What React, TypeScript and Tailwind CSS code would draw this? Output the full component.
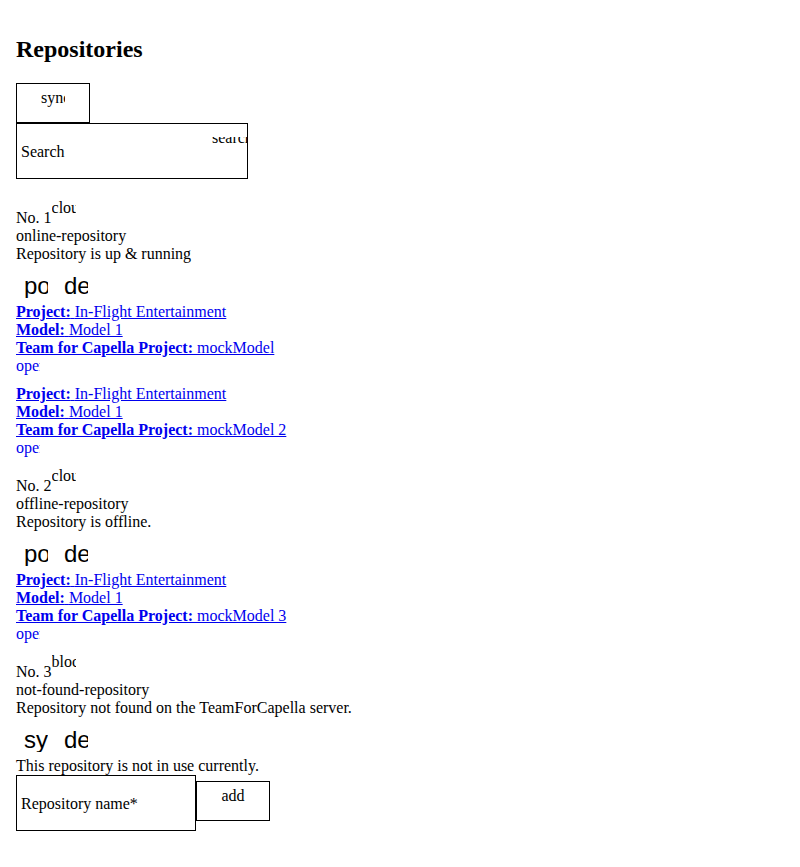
import React from "react";

type Link = { project: string; model: string; t4c: string };

type Repo = {
  no: number;
  icon: string;
  name: string;
  status: string;
  actions: string[];
  links: Link[];
  gap: string;
};

const repos: Repo[] = [
  {
    no: 1,
    icon: "cloud",
    name: "online-repository",
    status: "Repository is up & running",
    actions: ["post_add", "delete"],
    links: [
      { project: "In-Flight Entertainment", model: "Model 1", t4c: "mockModel" },
      { project: "In-Flight Entertainment", model: "Model 1", t4c: "mockModel 2" },
    ],
    gap: "mt-[29px]",
  },
  {
    no: 2,
    icon: "cloud_off",
    name: "offline-repository",
    status: "Repository is offline.",
    actions: ["post_add", "delete"],
    links: [{ project: "In-Flight Entertainment", model: "Model 1", t4c: "mockModel 3" }],
    gap: "mt-[19px]",
  },
  {
    no: 3,
    icon: "block",
    name: "not-found-repository",
    status: "Repository not found on the TeamForCapella server.",
    actions: ["sync", "delete"],
    links: [],
    gap: "mt-[19px]",
  },
];

// icon font is missing, so the ligature name shows up clipped to 24px
function ClippedIcon({ name, className = "" }: { name: string; className?: string }) {
  return (
    <span className={`inline-block w-6 h-[18px] overflow-hidden whitespace-nowrap leading-[18px] align-top ${className}`}>
      {name}
    </span>
  );
}

function IconButton({ name }: { name: string }) {
  return (
    <button className="w-10 h-10 px-2 pt-[11px] flex items-start text-black">
      <span className="block w-6 h-6 overflow-hidden whitespace-nowrap text-left text-[24px] leading-6 font-['Liberation_Sans',Arial,sans-serif]">
        {name}
      </span>
    </button>
  );
}

function TextField({ label, width, icon }: { label: string; width: string; icon?: string }) {
  return (
    <div className={`relative ${width} h-14 border border-black overflow-hidden`}>
      <div className="pl-1 pt-[19px] leading-[18px] whitespace-nowrap">{label}</div>
      {icon && (
        <div className="absolute left-[195px] top-[13px] w-[40px] h-[6px] overflow-hidden">
          <div className="-mt-[8px] leading-[18px] whitespace-nowrap">{icon}</div>
        </div>
      )}
    </div>
  );
}

function OutlinedIconButton({ name, className = "" }: { name: string; className?: string }) {
  return (
    <button className={`w-[74px] h-10 border border-black flex justify-center items-start pt-[5px] ${className}`}>
      <ClippedIcon name={name} />
    </button>
  );
}

function ModelLink({ link }: { link: Link }) {
  return (
    <div className="mb-[10px] leading-[18px] text-[#0000ee]">
      <div>
        <a href="#" className="underline">
          <b>Project:</b> {link.project}
        </a>
      </div>
      <div>
        <a href="#" className="underline">
          <b>Model:</b> {link.model}
        </a>
      </div>
      <div>
        <a href="#" className="underline">
          <b>Team for Capella Project:</b> {link.t4c}
        </a>
      </div>
      <div className="h-[18px]">
        <ClippedIcon name="open_in_new" />
      </div>
    </div>
  );
}

function RepoCard({ repo }: { repo: Repo }) {
  return (
    <div className={repo.gap}>
      <div className="h-[19px] pt-[1px] leading-[18px] whitespace-nowrap">
        No. {repo.no}
        <ClippedIcon name={repo.icon} className="relative -top-[10px]" />
      </div>
      <div className="leading-[18px]">{repo.name}</div>
      <div className="leading-[18px]">{repo.status}</div>
      <div className="flex h-10">
        {repo.actions.map((a) => (
          <IconButton key={a} name={a} />
        ))}
      </div>
      {repo.links.map((l) => (
        <ModelLink key={l.t4c} link={l} />
      ))}
      {repo.links.length === 0 && (
        <>
          <div className="leading-[18px]">This repository is not in use currently.</div>
          <div className="flex items-start">
            <TextField label="Repository name*" width="w-[180px]" />
            <OutlinedIconButton name="add" className="mt-[6px]" />
          </div>
        </>
      )}
    </div>
  );
}

export default function App() {
  return (
    <div className="min-h-screen bg-white text-black px-4 text-[16px] font-['Liberation_Serif','Times_New_Roman',serif]">
      <h2 className="pt-[35px] text-2xl leading-7 font-bold">Repositories</h2>
      <div className="mt-[20px]">
        <OutlinedIconButton name="sync" />
        <TextField label="Search" width="w-[232px]" icon="search" />
      </div>
      {repos.map((r) => (
        <RepoCard key={r.no} repo={r} />
      ))}
    </div>
  );
}
